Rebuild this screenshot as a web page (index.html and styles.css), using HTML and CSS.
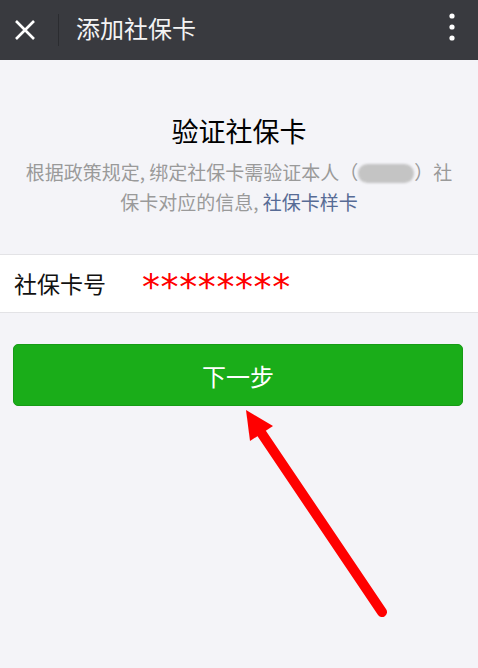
FILE: index.html
```html
<!DOCTYPE html>
<html lang="zh-CN">
<head>
<meta charset="utf-8">
<link rel="stylesheet" href="styles.css">
</head>
<body>
<div class="page">
  <header class="topbar">
    <svg class="close" width="22" height="22" viewBox="0 0 22 22"><path d="M2 2 L20 20 M20 2 L2 20" stroke="#fff" stroke-width="2.6" fill="none"/></svg>
    <span class="divider"></span>
    <span class="topbar-title">添加社保卡</span>
    <svg class="more" width="8" height="28" viewBox="0 0 8 28"><circle cx="4" cy="3" r="2.6" fill="#fff"/><circle cx="4" cy="14" r="2.6" fill="#fff"/><circle cx="4" cy="25" r="2.6" fill="#fff"/></svg>
  </header>
  <main class="content">
    <h1 class="title">验证社保卡</h1>
    <p class="desc">根据政策规定, 绑定社保卡需验证本人（<span class="masked"></span>）社保卡对应的信息, <a class="link">社保卡样卡</a></p>
    <div class="field">
      <span class="field-label">社保卡号</span>
      <span class="field-value">********</span>
    </div>
    <button class="btn">下一步</button>
  </main>
  <svg class="arrow" width="478" height="668" viewBox="0 0 478 668">
    <line x1="258" y1="428" x2="382" y2="612" stroke="#ff0000" stroke-width="10" stroke-linecap="round"/>
    <polygon points="246,410 273,426 250,441" fill="#ff0000"/>
  </svg>
</div>
</body>
</html>
```

FILE: styles.css
```css
* { box-sizing: border-box; }
html, body { margin: 0; padding: 0; }
body {
  background: #f4f4f8;
  font-family: "Noto Sans CJK SC", "Noto Sans", sans-serif;
  width: 478px;
  height: 668px;
  overflow: hidden;
}
.page { position: relative; width: 478px; height: 668px; }
.topbar {
  height: 60px;
  background: #393a3f;
  display: flex;
  align-items: center;
  padding: 0 22px 0 14px;
}
.close { flex: none; margin-top: -1px; }
.divider {
  width: 1px;
  height: 32px;
  background: #2b2c30;
  margin: 0 17px 0 22px;
}
.topbar-title {
  color: #f4f4f4;
  font-size: 24px;
  flex: 1;
  line-height: 1;
  margin-top: -4px;
}
.more { flex: none; margin-top: -6px; }
.content { display: flex; flex-direction: column; }
.title {
  margin: 53px 0 0;
  font-size: 27px;
  font-weight: 400;
  line-height: 36px;
  text-align: center;
  color: #000;
}
.desc {
  margin: 8px 20px 0;
  font-size: 19px;
  line-height: 30px;
  color: #9a9a9a;
  text-align: center;
}
.masked {
  display: inline-block;
  width: 56px;
  height: 19px;
  border-radius: 10px;
  background: #c4c4c4;
  filter: blur(1px);
  vertical-align: -3px;
}
.link { color: #576b95; }
.field {
  margin-top: 37px;
  height: 59px;
  background: #fff;
  border-top: 1px solid #e3e3e6;
  border-bottom: 1px solid #e3e3e6;
  display: flex;
  align-items: center;
  padding-left: 14px;
}
.field-label {
  font-size: 23px;
  color: #111;
  width: 128px;
  line-height: 1;
}
.field-value {
  font-family: "DejaVu Sans", sans-serif;
  color: #ff0000;
  font-size: 36px;
  letter-spacing: 0.6px;
  line-height: 1;
  margin-top: 6px;
}
.btn {
  margin: 31px 15px 0 13px;
  height: 62px;
  border: 1px solid #179b16;
  border-radius: 5px;
  background: #1aad19;
  color: #fff;
  font-family: "Noto Sans CJK SC", sans-serif;
  font-size: 24px;
  padding: 0;
}
.arrow { position: absolute; left: 0; top: 0; pointer-events: none; }
```
